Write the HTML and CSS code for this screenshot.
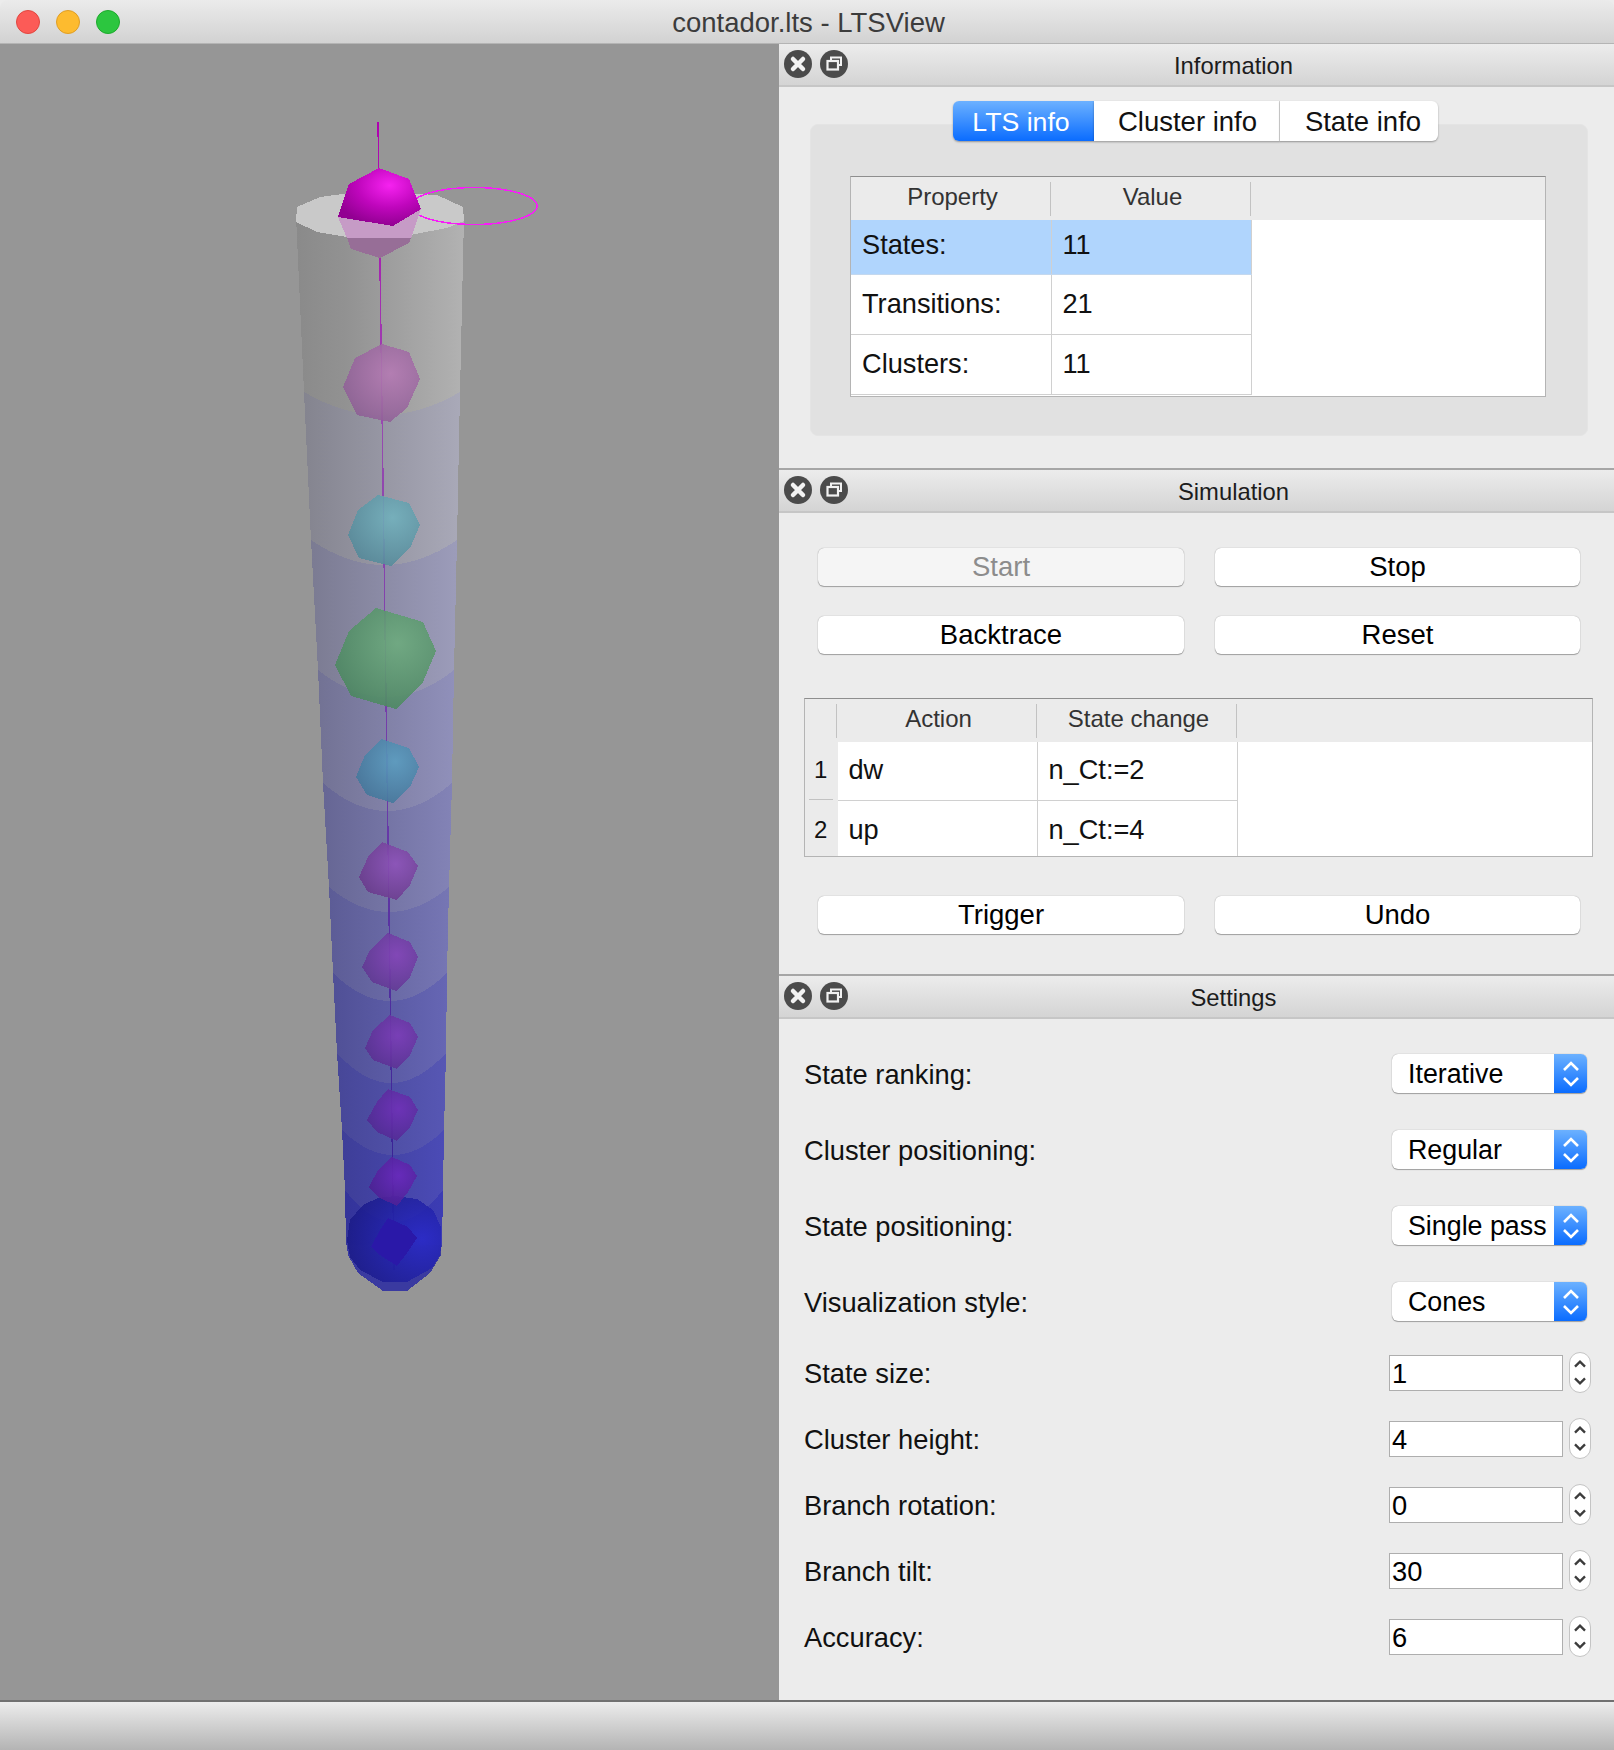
FILE: index.html
```html
<!DOCTYPE html>
<html lang="en">
<head>
    <meta charset="UTF-8">
    <title>contador.lts - LTSView</title>
    <link rel="stylesheet" href="styles.css">
</head>
<body>
    <svg class="defs" width="0" height="0">
        <symbol id="ico-close" viewBox="0 0 28 28">
            <circle cx="14" cy="14" r="14" fill="#4b4b4b"/>
            <path d="M9 9 L19 19 M19 9 L9 19" stroke="#f2f2f2" stroke-width="4.5" stroke-linecap="round"/>
        </symbol>
        <symbol id="ico-float" viewBox="0 0 28 28">
            <circle cx="14" cy="14" r="14" fill="#4b4b4b"/>
            <path d="M11 10 V7.5 H21 V15 H18" fill="none" stroke="#f2f2f2" stroke-width="2"/>
            <rect x="7.5" y="11" width="10.5" height="8.5" fill="none" stroke="#f2f2f2" stroke-width="2.2"/>
        </symbol>
        <symbol id="ico-updown" viewBox="0 0 20 30">
            <path d="M3 11 L10 4 L17 11 M3 19 L10 26 L17 19" fill="none" stroke="#fff" stroke-width="2.6"/>
        </symbol>
        <symbol id="ico-spin" viewBox="0 0 22 41">
            <path d="M5.5 14 L11 8.5 L16.5 14" fill="none" stroke="#3c3c3c" stroke-width="2.6"/>
            <path d="M5.5 27 L11 32.5 L16.5 27" fill="none" stroke="#3c3c3c" stroke-width="2.6"/>
        </symbol>
    </svg>

    <div class="window">
        <div class="titlebar">
            <span class="light red"></span>
            <span class="light yellow"></span>
            <span class="light green"></span>
            <span class="window-title">contador.lts - LTSView</span>
        </div>

        <div class="main">
            <div class="canvas">
                <svg class="scene" width="779" height="1656" viewBox="0 44 779 1656">
                    <defs>
                        <linearGradient id="c10"><stop offset="0" stop-color="#34349a"/><stop offset="1" stop-color="#3c3cb4"/></linearGradient>
                        <linearGradient id="c9"><stop offset="0" stop-color="#3e3e98"/><stop offset="1" stop-color="#4b4bb6"/></linearGradient>
                        <linearGradient id="c8"><stop offset="0" stop-color="#474798"/><stop offset="1" stop-color="#5757b4"/></linearGradient>
                        <linearGradient id="c7"><stop offset="0" stop-color="#505096"/><stop offset="1" stop-color="#6666b4"/></linearGradient>
                        <linearGradient id="c6"><stop offset="0" stop-color="#5c5c96"/><stop offset="1" stop-color="#7676b4"/></linearGradient>
                        <linearGradient id="c5"><stop offset="0" stop-color="#666694"/><stop offset="1" stop-color="#8383b6"/></linearGradient>
                        <linearGradient id="c4"><stop offset="0" stop-color="#727294"/><stop offset="1" stop-color="#9090ba"/></linearGradient>
                        <linearGradient id="c3"><stop offset="0" stop-color="#7b7b92"/><stop offset="1" stop-color="#9c9cba"/></linearGradient>
                        <linearGradient id="c2"><stop offset="0" stop-color="#84848f"/><stop offset="1" stop-color="#a9a9b8"/></linearGradient>
                        <linearGradient id="c1"><stop offset="0" stop-color="#8a8a8a"/><stop offset="0.3" stop-color="#929292"/><stop offset="1" stop-color="#b2b2b2"/></linearGradient>
                        <radialGradient id="s1" cx="0.62" cy="0.3" r="0.7"><stop offset="0" stop-color="#f622f0"/><stop offset="0.55" stop-color="#bf06bc"/><stop offset="1" stop-color="#920092"/></radialGradient>
                        <radialGradient id="s2" cx="0.62" cy="0.38" r="0.7"><stop offset="0" stop-color="#b57ab4"/><stop offset="1" stop-color="#8c5f94"/></radialGradient>
                        <radialGradient id="s3" cx="0.62" cy="0.32" r="0.7"><stop offset="0" stop-color="#72b1bd"/><stop offset="1" stop-color="#568a9a"/></radialGradient>
                        <radialGradient id="s4" cx="0.62" cy="0.35" r="0.7"><stop offset="0" stop-color="#6dab7e"/><stop offset="1" stop-color="#4b8660"/></radialGradient>
                        <radialGradient id="s5" cx="0.62" cy="0.35" r="0.7"><stop offset="0" stop-color="#5b9dc0"/><stop offset="1" stop-color="#44769a"/></radialGradient>
                        <radialGradient id="s6" cx="0.62" cy="0.38" r="0.7"><stop offset="0" stop-color="#8e52ba"/><stop offset="1" stop-color="#683a8a"/></radialGradient>
                        <radialGradient id="s7" cx="0.62" cy="0.38" r="0.7"><stop offset="0" stop-color="#8444b8"/><stop offset="1" stop-color="#5e3890"/></radialGradient>
                        <radialGradient id="s8" cx="0.62" cy="0.38" r="0.7"><stop offset="0" stop-color="#7c3cb8"/><stop offset="1" stop-color="#583090"/></radialGradient>
                        <radialGradient id="s9" cx="0.62" cy="0.38" r="0.7"><stop offset="0" stop-color="#7030b8"/><stop offset="1" stop-color="#4f2a90"/></radialGradient>
                        <radialGradient id="s10" cx="0.62" cy="0.38" r="0.7"><stop offset="0" stop-color="#6a28bc"/><stop offset="1" stop-color="#4a2090"/></radialGradient>
                        <radialGradient id="big" cx="0.8" cy="0.5" r="0.85"><stop offset="0" stop-color="#2a2ac8"/><stop offset="1" stop-color="#1a1a84"/></radialGradient>
                        <linearGradient id="edge" gradientUnits="userSpaceOnUse" x1="0" y1="122" x2="0" y2="1270">
                            <stop offset="0" stop-color="#b000b0"/>
                            <stop offset="0.25" stop-color="#9a4ab0"/>
                            <stop offset="0.6" stop-color="#6a3aa8"/>
                            <stop offset="1" stop-color="#2a1c90"/>
                        </linearGradient>
                    </defs>

                    <!-- cones, lowest first so each one sits on the next -->
                    <polygon fill="#3a3aa0" points="346,1240 348,1255 358,1273 383,1291 407,1291 430,1273 441,1255 442,1240"/>
                    <path fill="url(#c10)" d="M345 1190 L346 1245 L442 1245 L443 1190 Z"/>
                    <path fill="url(#c9)" d="M342 1130 L345 1190 Q394 1254 443 1190 L444 1130 Z"/>
                    <path fill="url(#c8)" d="M337 1053 L342 1130 Q393 1180 444 1130 L446 1053 Z"/>
                    <path fill="url(#c7)" d="M333 973 L337 1053 Q391 1113 446 1053 L447 973 Z"/>
                    <path fill="url(#c6)" d="M329 887 L333 973 Q390 1029 447 973 L449 887 Z"/>
                    <path fill="url(#c5)" d="M323 783 L329 887 Q389 937 449 887 L452 783 Z"/>
                    <path fill="url(#c4)" d="M318 670 L323 783 Q387 839 452 783 L454 670 Z"/>
                    <path fill="url(#c3)" d="M311 540 L318 670 Q386 724 454 670 L457 540 Z"/>
                    <path fill="url(#c2)" d="M304 392 L311 540 Q384 590 457 540 L460 392 Z"/>
                    <path fill="url(#c1)" d="M296 216 L304 392 Q382 438 460 392 L464 216 Z"/>

                    <!-- top disc and the selection ring -->
                    <polygon fill="#c9c9c9" points="296,222 297,207 320,197 350,193 400,193 437,195 463,207 464,221 447,228 410,235 380,238 347,237 317,232"/>
                    <line x1="378" y1="122" x2="394" y2="1270" stroke="url(#edge)" stroke-width="1.4"/>
                    <ellipse cx="474" cy="206" rx="63" ry="18.5" fill="none" stroke="#f81cf8" stroke-width="1.5"/>

                    <!-- states -->
                    <polygon fill="#c69bc6" points="338,217 393,226 421,209 411,238 347,238"/>
                    <polygon fill="#976e97" points="347,238 411,238 409,243 380,258 351,249"/>
                    <polygon fill="url(#s1)" points="379,168 409,179 421,209 393,226 338,217 349,184"/>
                    <polygon class="state" fill="url(#s2)" points="382,344 409,352 420,379 407,408 390,422 357,415 343,387 355,358"/>
                    <polygon class="state" fill="url(#s3)" points="378,495 409,503 420,525 410,548 391,566 359,558 348,535 358,510"/>
                    <polygon class="state" fill="url(#s4)" points="376,608 423,622 436,651 423,682 396,709 351,696 335,665 349,631"/>
                    <polygon class="state" fill="url(#s5)" points="381,739 409,748 419,767 410,787 393,803 367,795 356,777 365,755"/>
                    <polygon class="state" fill="url(#s6)" points="382,842 408,852 418,866 410,885 397,900 368,892 359,877 368,857"/>
                    <polygon class="state" fill="url(#s7)" points="388,933 410,942 418,957 410,977 396,991 372,982 362,967 370,950"/>
                    <polygon class="state" fill="url(#s8)" points="390,1015 410,1023 418,1037 410,1055 397,1069 373,1060 365,1048 373,1030"/>
                    <polygon class="state" fill="url(#s9)" points="388,1089 410,1097 418,1110 410,1127 397,1141 377,1132 367,1120 377,1102"/>
                    <polygon class="big-state" fill="url(#big)" points="395,1196 417,1199 433,1210 441,1227 441,1247 440,1255 432,1268 407,1282 383,1282 360,1270 350,1257 347,1240 350,1220 363,1205 378,1198"/>
                    <polygon class="state" fill="url(#s10)" points="392,1157 410,1165 417,1176 408,1192 397,1206 378,1197 369,1187 378,1170"/>
                    <polygon fill="#2a18a8" points="388,1218 408,1227 417,1238 407,1253 397,1266 380,1255 371,1247 380,1230"/>
                </svg>
            </div>

            <div class="docks">
                <section class="dock dock-info">
                    <header class="dock-head">
                        <svg class="dock-btn"><use href="#ico-close"/></svg>
                        <svg class="dock-btn"><use href="#ico-float"/></svg>
                        <span class="dock-title">Information</span>
                    </header>
                    <div class="tabs">
                        <span class="tab tab-active">LTS info</span>
                        <span class="tab tab-cluster">Cluster info</span>
                        <span class="tab tab-state">State info</span>
                    </div>
                    <div class="pane">
                        <div class="grid-box info-box">
                            <table class="grid">
                                <tr class="grid-head"><th>Property</th><th>Value</th><th class="fill"></th></tr>
                                <tr class="selected"><td>States:</td><td>11</td></tr>
                                <tr><td>Transitions:</td><td>21</td></tr>
                                <tr><td>Clusters:</td><td>11</td></tr>
                            </table>
                        </div>
                    </div>
                </section>

                <section class="dock dock-sim">
                    <header class="dock-head">
                        <svg class="dock-btn"><use href="#ico-close"/></svg>
                        <svg class="dock-btn"><use href="#ico-float"/></svg>
                        <span class="dock-title">Simulation</span>
                    </header>
                    <div class="btn-grid">
                        <button class="btn" disabled>Start</button>
                        <button class="btn">Stop</button>
                        <button class="btn">Backtrace</button>
                        <button class="btn">Reset</button>
                    </div>
                    <div class="grid-box sim-box">
                        <table class="grid">
                            <tr class="grid-head"><th class="row-no"></th><th>Action</th><th>State change</th><th class="fill"></th></tr>
                            <tr class="tall"><td class="row-no row-first">1</td><td>dw</td><td>n_Ct:=2</td></tr>
                            <tr class="short"><td class="row-no">2</td><td>up</td><td>n_Ct:=4</td></tr>
                        </table>
                    </div>
                    <div class="btn-grid btn-grid-low">
                        <button class="btn">Trigger</button>
                        <button class="btn">Undo</button>
                    </div>
                </section>

                <section class="dock dock-settings">
                    <header class="dock-head">
                        <svg class="dock-btn"><use href="#ico-close"/></svg>
                        <svg class="dock-btn"><use href="#ico-float"/></svg>
                        <span class="dock-title">Settings</span>
                    </header>
                    <div class="settings">
                        <div class="row combo-row"><span class="label">State ranking:</span><div class="combo"><span class="combo-text">Iterative</span><span class="combo-arrow"><svg class="updown"><use href="#ico-updown"/></svg></span></div></div>
                        <div class="row combo-row"><span class="label">Cluster positioning:</span><div class="combo"><span class="combo-text">Regular</span><span class="combo-arrow"><svg class="updown"><use href="#ico-updown"/></svg></span></div></div>
                        <div class="row combo-row"><span class="label">State positioning:</span><div class="combo"><span class="combo-text">Single pass</span><span class="combo-arrow"><svg class="updown"><use href="#ico-updown"/></svg></span></div></div>
                        <div class="row combo-row"><span class="label">Visualization style:</span><div class="combo"><span class="combo-text">Cones</span><span class="combo-arrow"><svg class="updown"><use href="#ico-updown"/></svg></span></div></div>
                        <div class="row spin-row"><span class="label">State size:</span><div class="spin"><span class="spin-input">1</span><svg class="spin-btn"><use href="#ico-spin"/></svg></div></div>
                        <div class="row spin-row"><span class="label">Cluster height:</span><div class="spin"><span class="spin-input">4</span><svg class="spin-btn"><use href="#ico-spin"/></svg></div></div>
                        <div class="row spin-row"><span class="label">Branch rotation:</span><div class="spin"><span class="spin-input">0</span><svg class="spin-btn"><use href="#ico-spin"/></svg></div></div>
                        <div class="row spin-row"><span class="label">Branch tilt:</span><div class="spin"><span class="spin-input">30</span><svg class="spin-btn"><use href="#ico-spin"/></svg></div></div>
                        <div class="row spin-row"><span class="label">Accuracy:</span><div class="spin"><span class="spin-input">6</span><svg class="spin-btn"><use href="#ico-spin"/></svg></div></div>
                    </div>
                </section>
            </div>
        </div>

        <div class="statusbar"></div>
    </div>
</body>
</html>
```

FILE: styles.css
```css
* {
    box-sizing: border-box;
}
body {
    margin: 0;
    background: #ececec;
    font-family: "Liberation Sans", Arial, sans-serif;
    font-size: 27.3px;
    color: #111;
}
.defs {
    position: absolute;
}
.window {
    width: 1614px;
    height: 1750px;
    display: flex;
    flex-direction: column;
    overflow: hidden;
}

/* title bar */
.titlebar {
    height: 44px;
    flex: none;
    display: flex;
    align-items: center;
    padding-left: 16px;
    gap: 16px;
    position: relative;
    background: linear-gradient(#ebebeb, #d2d2d2);
    border-bottom: 1px solid #b4b4b4;
    border-radius: 8px 8px 0 0;
}
.light {
    width: 24px;
    height: 24px;
    border-radius: 50%;
    margin-top: 1px;
}
.red { background: #fc5b57; border: 1px solid #e2463f; }
.yellow { background: #fdbb2f; border: 1px solid #e09e24; }
.green { background: #2cc63f; border: 1px solid #1daa2c; }
.window-title {
    position: absolute;
    left: 0;
    width: 1617px;
    padding-top: 2px;
    text-align: center;
    font-size: 27.5px;
    color: #3c3c3c;
}

/* main area */
.main {
    height: 1656px;
    flex: none;
    display: flex;
}
.canvas {
    width: 779px;
    flex: none;
    background: #969696;
}
.scene {
    display: block;
    shape-rendering: crispEdges;
}
.state {
    opacity: 0.9;
}
.big-state {
    opacity: 0.88;
}
.docks {
    flex: 1;
    display: flex;
    flex-direction: column;
}
.dock-info { height: 424px; }
.dock-sim { height: 506px; }
.dock-settings { height: 726px; }

.dock-head {
    height: 45px;
    display: flex;
    align-items: center;
    gap: 8px;
    padding: 0 0 1px 5px;
    position: relative;
    background: linear-gradient(#ececec, #d4d4d4);
    border-top: 2px solid #a6a6a6;
    border-bottom: 2px solid #c6c6c6;
}
.dock-info .dock-head {
    height: 43px;
    border-top: 0;
}
.dock-btn {
    width: 28px;
    height: 28px;
}
.dock-title {
    position: absolute;
    left: 0;
    right: 0;
    text-align: center;
    font-size: 23.8px;
    padding: 4px 0 0 74px;
    color: #1c1c1c;
}

/* tabs */
.tabs {
    display: flex;
    margin: 14px 0 -17px 174px;
    height: 40px;
    position: relative;
    font-size: 27.5px;
}
.tab {
    display: flex;
    align-items: center;
    justify-content: center;
    padding-top: 2px;
    background: #fff;
    box-shadow: 0 1px 2px rgba(0, 0, 0, 0.35);
}
.tab-active {
    width: 141px;
    padding-right: 5px;
    font-size: 26.7px;
    color: #fff;
    background: linear-gradient(#6cb1ff, #0a6cff);
    border-radius: 6px 0 0 6px;
}
.tab-cluster {
    width: 186px;
    padding-left: 2px;
    border-right: 1px solid #d8d8d8;
}
.tab-state {
    width: 158px;
    padding-left: 8px;
    border-radius: 0 6px 6px 0;
}
.pane {
    margin: 0 26px 0 31px;
    height: 312px;
    padding: 51px 41px 0 39px;
    background: #e1e1e1;
    border: 1px solid #e4e4e4;
    border-radius: 8px;
}

/* tables */
.grid-box {
    background: #fff;
    border: 1px solid #b4b4b4;
    border-top-color: #8e8e8e;
}
.info-box {
    height: 221px;
}
.sim-box {
    height: 159px;
    margin: 44px 21px 0 25px;
}
.grid {
    width: 100%;
    border-collapse: collapse;
    table-layout: fixed;
}
.grid th,
.grid td {
    width: 200px;
    padding: 0 11px;
    font-size: 27.2px;
    font-weight: normal;
    text-align: left;
    color: #111;
    border-right: 1px solid #d0d0d0;
    border-bottom: 1px solid #d0d0d0;
}
.grid tr {
    height: 60px;
}
.grid-head {
    background: #ebebeb;
}
.grid .grid-head {
    height: 43px;
}
.grid .grid-head th {
    padding: 0 0 3px 3px;
    font-size: 24px;
    text-align: center;
    color: #333;
    border: 0;
    background: linear-gradient(#c2c2c2, #c2c2c2) right -1px center / 2px 34px no-repeat;
}
.grid .grid-head th.fill {
    width: auto;
    background: none;
}
.grid .selected {
    height: 54px;
    background: #b0d5fd;
}
.grid .selected td {
    padding-bottom: 4px;
    border-bottom-color: #c4d8ee;
}
.grid .row-no {
    width: 32px;
    padding: 0;
    text-align: center;
    font-size: 24px;
    background-color: #ebebeb;
    border-right-color: #ebebeb;
    border-bottom-color: #ebebeb;
}
.grid .row-first {
    background: #ebebeb linear-gradient(#c2c2c2, #c2c2c2) center bottom / 24px 1px no-repeat;
}
.sim-box .grid tr {
    height: 58px;
}
.sim-box .grid .grid-head {
    height: 43px;
}
.sim-box .tall td {
    padding-bottom: 2px;
}
.sim-box .grid .short {
    height: 56px;
}
.sim-box .short td {
    padding-top: 3px;
    border-bottom: 0;
}

/* buttons */
.btn-grid {
    display: grid;
    grid-template-columns: 366px 365px;
    gap: 30px 31px;
    margin: 35px 0 0 39px;
}
.btn-grid-low {
    margin-top: 39px;
}
.btn {
    height: 38px;
    font: inherit;
    font-size: 27.5px;
    color: #000;
    background: #fff;
    border: 0;
    border-radius: 6px;
    box-shadow: 0 0 1px rgba(0, 0, 0, 0.4), 0 1px 1px rgba(0, 0, 0, 0.3);
    padding: 0;
}
.btn:disabled {
    color: #8c8c8c;
    background: #f5f5f5;
}

/* settings */
.settings {
    padding: 35px 0 0 25px;
}
.label {
    padding-top: 3px;
}
.row {
    display: flex;
    justify-content: space-between;
    align-items: center;
}
.combo-row {
    height: 39px;
    margin-bottom: 37px;
    padding-right: 27px;
}
.combo-row:nth-child(4) {
    margin-bottom: 31px;
}
.spin-row {
    height: 41px;
    margin-bottom: 25px;
    padding-right: 23px;
}
.combo {
    width: 195px;
    height: 39px;
    display: flex;
    background: #fff;
    border-radius: 6px;
    box-shadow: 0 0 1px rgba(0, 0, 0, 0.4), 0 1px 1px rgba(0, 0, 0, 0.3);
    overflow: hidden;
}
.combo-text {
    flex: 1;
    padding-left: 16px;
    font-size: 26.8px;
    line-height: 40px;
    white-space: nowrap;
    color: #000;
}
.combo-arrow {
    width: 33px;
    flex: none;
    display: flex;
    align-items: center;
    justify-content: center;
    background: linear-gradient(#6cb1ff, #0a6cff);
}
.updown {
    width: 20px;
    height: 30px;
}
.spin {
    display: flex;
    align-items: center;
    gap: 6px;
}
.spin-input {
    width: 174px;
    height: 36px;
    padding-left: 2px;
    line-height: 36px;
    background: #fff;
    border: 1px solid #aeaeae;
    color: #000;
}
.spin-btn {
    width: 22px;
    height: 41px;
    background: #fff;
    border: 1px solid #c4c4c4;
    border-radius: 11px;
}

.statusbar {
    flex: 1;
    background: linear-gradient(#ececec, #b4b4b4);
    border-top: 2px solid #707070;
}
```
